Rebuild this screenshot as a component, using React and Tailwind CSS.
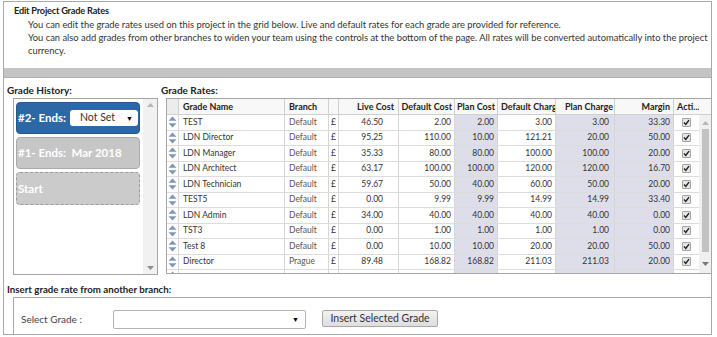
import React from "react";

const rows = [
  ["TEST", "Default", "46.50", "2.00", "2.00", "3.00", "3.00", "33.30"],
  ["LDN Director", "Default", "95.25", "110.00", "10.00", "121.21", "20.00", "50.00"],
  ["LDN Manager", "Default", "35.33", "80.00", "80.00", "100.00", "100.00", "20.00"],
  ["LDN Architect", "Default", "63.17", "100.00", "100.00", "120.00", "120.00", "16.70"],
  ["LDN Technician", "Default", "59.67", "50.00", "40.00", "60.00", "50.00", "20.00"],
  ["TEST5", "Default", "0.00", "9.99", "9.99", "14.99", "14.99", "33.40"],
  ["LDN Admin", "Default", "34.00", "40.00", "40.00", "40.00", "40.00", "0.00"],
  ["TST3", "Default", "0.00", "1.00", "1.00", "1.00", "1.00", "0.00"],
  ["Test 8", "Default", "0.00", "10.00", "10.00", "20.00", "20.00", "50.00"],
  ["Director", "Prague", "89.48", "168.82", "168.82", "211.03", "211.03", "20.00"],
  ["", "", "", "", "", "", "", ""],
];

const cols =
  "grid grid-cols-[12px_106px_44px_10px_60px_56px_43px_58px_59px_59px_25px]";

const MoveIcon = () => (
  <svg width="9" height="12" viewBox="0 0 9 12">
    <path d="M4.5 0.5 L8.5 4.8 H0.5 Z" fill="#7f97b5" />
    <path d="M0.5 7.2 H8.5 L4.5 11.5 Z" fill="#7f97b5" />
  </svg>
);

const Check = ({ on = true }) => (
  <div className="w-[9px] h-[9px] border border-[#a3a3a3] bg-[#e6e6e6] rounded-[1px] flex items-center justify-center">
    {on && (
      <svg width="7" height="7" viewBox="0 0 7 7">
        <path d="M1 3.6 L2.8 5.4 L6 1.2" stroke="#1f1f1f" strokeWidth="1.4" fill="none" />
      </svg>
    )}
  </div>
);

const Arrow = ({ up, color = "#9a9a9a" }) => (
  <svg width="7" height="4" viewBox="0 0 7 4">
    <path d={up ? "M3.5 0 L7 4 H0 Z" : "M0 0 H7 L3.5 4 Z"} fill={color} />
  </svg>
);

const App = () => {
  return (
    <div className="w-[717px] h-[337px] bg-white overflow-hidden pt-[1px] pl-[3px] font-['Lato',sans-serif] text-[#333]">
      <div className="w-[709px] h-[334px] border border-[#a9a9a9] flex flex-col">
        {/* Header */}
        <div className="h-[66px] pl-[10px] pt-[2px]">
          <div className="text-[9.2px] leading-[14px] font-bold tracking-[-0.2px] text-[#222]">
            Edit Project Grade Rates
          </div>
          <div className="pl-[14px] text-[9.35px] leading-[13px] whitespace-nowrap">
            <div>
              You can edit the grade rates used on this project in the grid below. Live and default rates for each grade are provided for reference.
            </div>
            <div>
              You can also add grades from other branches to widen your team using the controls at the bottom of the page. All rates will be converted automatically into the project
            </div>
            <div>currency.</div>
          </div>
        </div>
        <div className="h-[10px] bg-[#c4c4c4] border-b border-[#b2b2b2]" />

        {/* Main */}
        <div className="flex">
          {/* Grade History */}
          <div className="w-[157px] shrink-0">
            <div className="pl-[3px] pt-[5px] text-[10px] leading-[14px] font-bold text-[#222]">
              Grade History:
            </div>
            <div className="ml-[9px] mt-[1px] w-[145px] h-[177px] border border-[#a5a5a5] flex">
              <div className="flex-1 pl-[2px] pt-[3px] flex flex-col gap-[3px]">
                <div className="w-[124px] h-[32px] rounded-[4px] bg-[#2c67a6] border border-[#24588f] flex items-center pl-[1px]">
                  <span className="text-white font-bold text-[11.5px] w-[52px]">#2- Ends:</span>
                  <div className="w-[68px] h-[16px] bg-white rounded-[3px] flex items-center pl-[10px] pr-[5px] justify-between">
                    <span className="text-[10.5px] text-[#333]">Not Set</span>
                    <span className="text-[7px] text-black">▼</span>
                  </div>
                </div>
                <div className="w-[124px] h-[32px] rounded-[4px] bg-[#c6c6c6] border border-[#aaaaaa] flex items-center pl-[1px]">
                  <span className="text-white font-bold text-[11.5px] whitespace-pre">#1- Ends:  Mar 2018</span>
                </div>
                <div className="w-[124px] h-[33px] rounded-[4px] bg-[#cbcbcb] border border-dashed border-[#9d9d9d] flex items-center pl-[1px]">
                  <span className="text-white font-bold text-[11.5px]">Start</span>
                </div>
              </div>
              <div className="w-[14px] bg-[#f1f1f1] flex flex-col items-center justify-between py-[4px]">
                <Arrow up color="#b5b5b5" />
                <Arrow color="#8e8e8e" />
              </div>
            </div>
          </div>

          {/* Grade Rates */}
          <div className="flex-1">
            <div className="pt-[5px] text-[10px] leading-[14px] font-bold text-[#222]">
              Grade Rates:
            </div>
            <div className="ml-[5px] mt-[1px] h-[176px] border-l border-t border-b border-[#a5a5a5] flex overflow-hidden">
              <div className="w-[532px] shrink-0">
                {/* header */}
                <div className={`${cols} h-[16px] text-[9px] font-bold text-[#222] border-b border-[#d0d0d0] bg-[#f8f8f8]`}>
                  <div className="bg-[#ececec] border-r border-[#d0d0d0]" />
                  <div className="border-r border-[#d0d0d0] pl-[4px] flex items-center">Grade Name</div>
                  <div className="border-r border-[#d0d0d0] pl-[4px] flex items-center">Branch</div>
                  <div className="border-r border-[#d0d0d0]" />
                  <div className="border-r border-[#d0d0d0] pr-[4px] flex items-center justify-end whitespace-nowrap">Live Cost</div>
                  <div className="border-r border-[#d0d0d0] pr-[2px] flex items-center justify-end whitespace-nowrap overflow-hidden">Default Cost</div>
                  <div className="border-r border-[#d0d0d0] pr-[2px] flex items-center justify-end whitespace-nowrap overflow-hidden">Plan Cost</div>
                  <div className="border-r border-[#d0d0d0] pl-[3px] flex items-center whitespace-nowrap overflow-hidden">Default Charge</div>
                  <div className="border-r border-[#d0d0d0] pl-[9px] flex items-center whitespace-nowrap overflow-hidden">Plan Charge</div>
                  <div className="border-r border-[#d0d0d0] pr-[3px] flex items-center justify-end">Margin</div>
                  <div className="pl-[3px] flex items-center whitespace-nowrap">Acti...</div>
                </div>
                {/* body */}
                {rows.map((r, i) => (
                  <div
                    key={i}
                    className={`${cols} h-[15.5px] text-[8.5px] text-[#333] border-b border-[#dcdcdc]`}
                  >
                    <div className="border-r border-[#d6d6d6] flex items-center justify-center">
                      <MoveIcon />
                    </div>
                    <div className="border-r border-[#d6d6d6] pl-[4px] flex items-center whitespace-nowrap">{r[0]}</div>
                    <div className="border-r border-[#d6d6d6] pl-[4px] flex items-center text-[#555]">{r[1]}</div>
                    <div className="border-r border-[#d6d6d6] flex items-center justify-center">{r[0] && "£"}</div>
                    <div className="border-r border-[#d6d6d6] pr-[15px] flex items-center justify-end">{r[2]}</div>
                    <div className="border-r border-[#d6d6d6] pr-[3px] flex items-center justify-end">{r[3]}</div>
                    <div className="border-r border-[#d6d6d6] bg-[#dedeea] pr-[3px] flex items-center justify-end">{r[4]}</div>
                    <div className="border-r border-[#d6d6d6] pr-[3px] flex items-center justify-end">{r[5]}</div>
                    <div className="border-r border-[#d6d6d6] bg-[#dedeea] pr-[5px] flex items-center justify-end">{r[6]}</div>
                    <div className="border-r border-[#d6d6d6] bg-[#dedeea] pr-[3px] flex items-center justify-end">{r[7]}</div>
                    <div className="flex items-center justify-center">
                      <Check on={!!r[0]} />
                    </div>
                  </div>
                ))}
              </div>
              {/* scrollbar */}
              <div className="flex-1 flex flex-col">
                <div className="h-[16px] bg-[#f8f8f8] border-b border-[#d0d0d0]" />
                <div className="flex-1 bg-[#f0f0f0] flex flex-col items-center pt-[6px] pb-[7px]">
                  <Arrow up color="#b8b8b8" />
                  <div className="w-[7px] flex-1 bg-[#c2c2c2] mt-[4px] mb-[10px]" />
                  <Arrow color="#7a7a7a" />
                </div>
              </div>
            </div>
          </div>
        </div>

        {/* Insert from another branch */}
        <div className="pl-[3px] pt-[7px] text-[9.7px] leading-[14px] font-bold text-[#222]">
          Insert grade rate from another branch:
        </div>
        <div className="ml-[9px] mt-[1px] flex-1 border-l border-t border-[#a9a9a9] flex items-start pt-[12px] pl-[7px]">
          <div className="w-[92px] text-[10px] text-[#444] leading-[19px]">Select Grade :</div>
          <div className="w-[193px] h-[19px] border border-[#b3b3b3] rounded-[2px] bg-white flex items-center justify-end pr-[6px]">
            <span className="text-[7px] text-black">▼</span>
          </div>
          <button className="ml-[16px] w-[116px] h-[17px] border border-[#a8a8a8] rounded-[2px] bg-gradient-to-b from-[#f2f2f2] to-[#dedede] text-[10.5px] text-[#333] flex items-center justify-center">
            Insert Selected Grade
          </button>
        </div>
      </div>
    </div>
  );
};

export default App;
